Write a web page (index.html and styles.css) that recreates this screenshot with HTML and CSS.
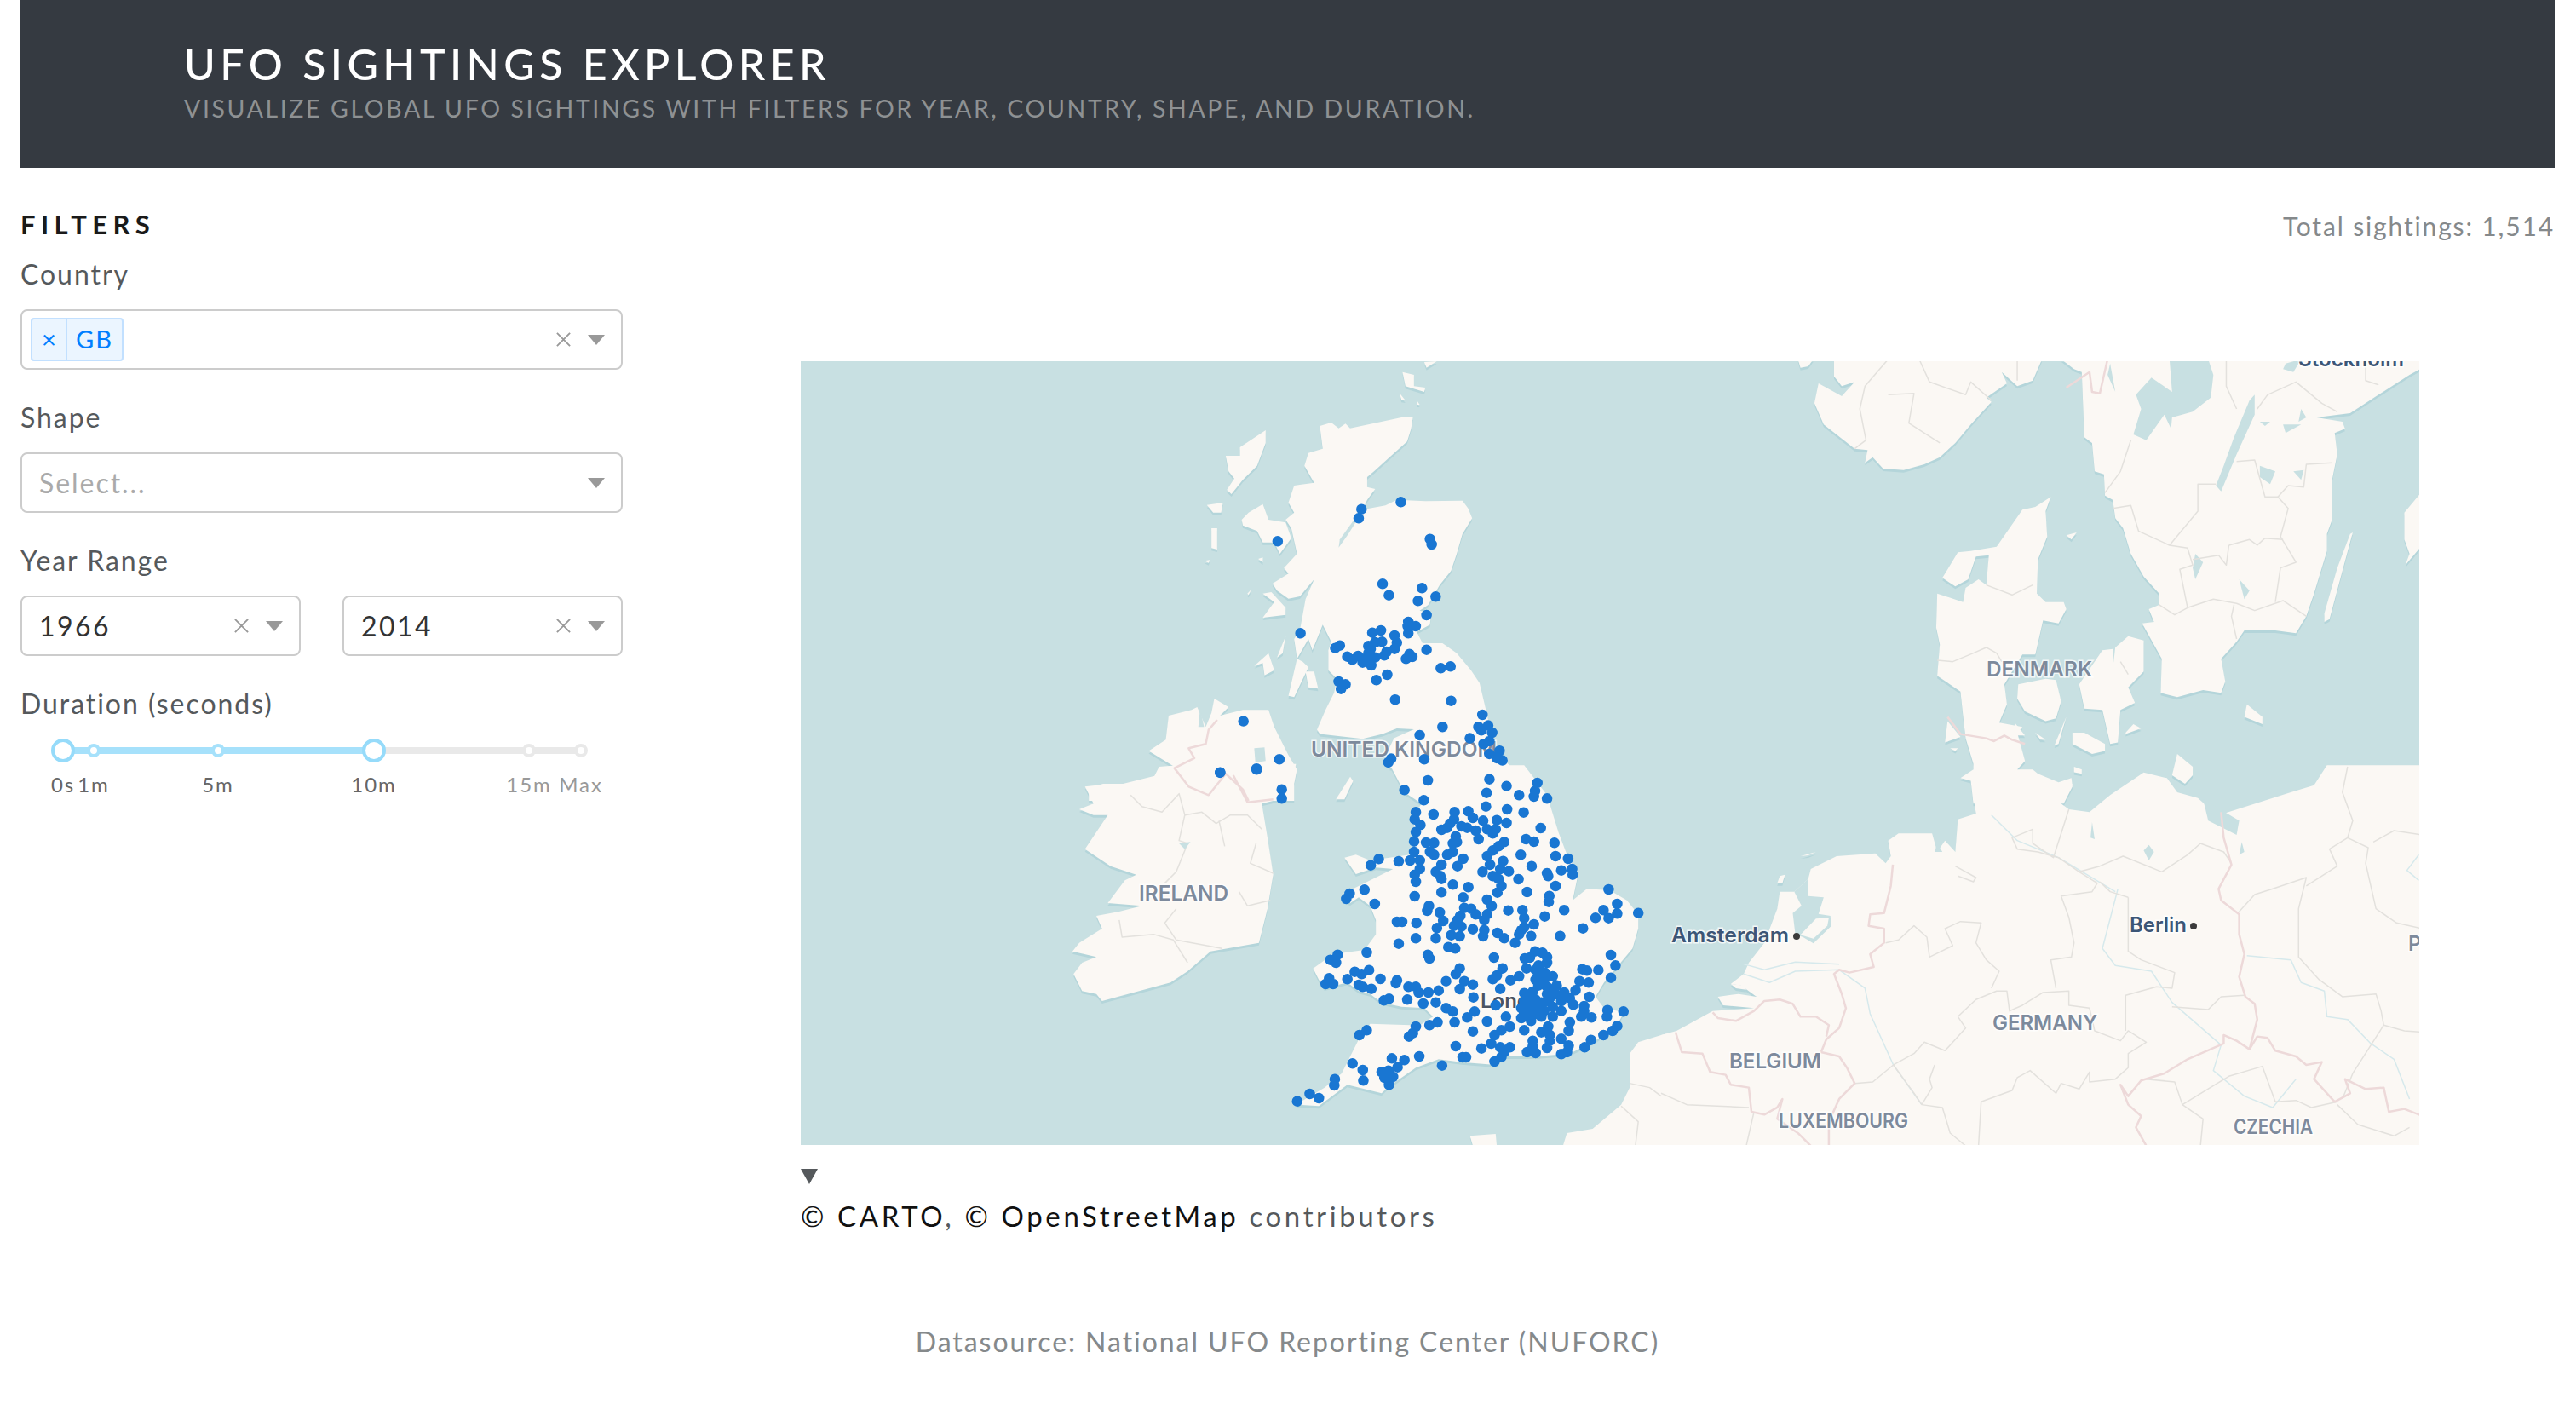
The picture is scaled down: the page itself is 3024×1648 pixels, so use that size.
FILE: index.html
```html
<!DOCTYPE html>
<html lang="en">
<head>
<meta charset="utf-8">
<title>UFO Sightings Explorer</title>
<link rel="stylesheet" href="styles.css">
</head>
<body>
<header class="hero">
  <h1 class="hero-title">UFO SIGHTINGS EXPLORER</h1>
  <p class="hero-sub">VISUALIZE GLOBAL UFO SIGHTINGS WITH FILTERS FOR YEAR, COUNTRY, SHAPE, AND DURATION.</p>
</header>
<main class="main">
  <aside class="filters">
    <h2 class="filters-title">FILTERS</h2>
    <div class="field">
      <label class="label">Country</label>
      <div class="select">
        <div class="select-value">
          <span class="tag"><span class="tag-x">×</span><span class="tag-text">GB</span></span>
        </div>
        <svg class="clear" viewBox="0 0 20 20"><path d="M2 2 18 18M18 2 2 18"/></svg>
        <span class="arrow"></span>
      </div>
    </div>
    <div class="field">
      <label class="label">Shape</label>
      <div class="select">
        <div class="select-value"><span class="placeholder">Select...</span></div>
        <span class="arrow"></span>
      </div>
    </div>
    <div class="field">
      <label class="label">Year Range</label>
      <div class="year-row">
        <div class="select">
          <div class="select-value"><span class="value">1966</span></div>
          <svg class="clear" viewBox="0 0 20 20"><path d="M2 2 18 18M18 2 2 18"/></svg>
          <span class="arrow"></span>
        </div>
        <div class="select">
          <div class="select-value"><span class="value">2014</span></div>
          <svg class="clear" viewBox="0 0 20 20"><path d="M2 2 18 18M18 2 2 18"/></svg>
          <span class="arrow"></span>
        </div>
      </div>
    </div>
    <div class="field">
      <label class="label">Duration (seconds)</label>
      <div class="slider">
        <div class="rail"></div>
        <div class="track"></div>
        <span class="stop on" style="left:86px"></span>
        <span class="stop on" style="left:232px"></span>
        <span class="stop" style="left:597px"></span>
        <span class="stop" style="left:658px"></span>
        <span class="handle" style="left:50px"></span>
        <span class="handle" style="left:415px"></span>
        <span class="mark on" style="left:50px">0s</span>
        <span class="mark on" style="left:86px">1m</span>
        <span class="mark on" style="left:232px">5m</span>
        <span class="mark on" style="left:415px">10m</span>
        <span class="mark" style="left:597px">15m</span>
        <span class="mark" style="left:658px">Max</span>
      </div>
    </div>
  </aside>
  <section class="content">
    <p class="total">Total sightings: 1,514</p>
    <div class="map-wrap">
      <svg class="map" viewBox="940 424 1900 920" width="1900" height="920">
        <defs>
          <g id="land">
            <g transform="translate(930 420) scale(.6696 .3333)">
              <polygon points="925,240 945,228 958,248 970,232 978,248 1040,222 1075,207 1088,210 1085,250 1078,295 1050,345 1020,400 1008,420 1008,455 1022,462 1008,500 1000,535 1040,520 1060,500 1110,505 1175,503 1185,530 1192,565 1175,620 1165,690 1155,750 1135,800 1115,870 1100,890 1120,900 1118,940 1095,965 1105,1005 1140,1005 1165,1040 1190,1100 1205,1145 1215,1230 1225,1320 1235,1380 1250,1420 1262,1445 1048,1445 1042,1395 1055,1340 1090,1308 1060,1305 1035,1325 1000,1342 925,1325 920,1310 935,1240 950,1180 955,1130 940,1100 940,1030 945,1000 930,940 912,1030 905,990 885,1060 895,1070 905,1090 880,1195 870,1190 885,1060 880,990 890,960 900,850 915,780 890,840 870,848 850,820 842,795 870,760 862,740 885,690 875,600 865,570 880,545 870,510 880,450 915,440 898,380 905,335 930,320"/>
              <polygon points="800,545 825,515 835,570 865,580 875,635 855,690 845,650 825,650 815,610 790,590 788,570"/>
              <polygon points="830,255 830,300 815,380 790,430 770,480 762,465 775,425 765,400 760,345 785,345 785,315"/>
              <polygon points="735,600 745,600 745,675 735,670"/>
              <polygon points="727,518 755,510 752,545 738,545"/>
              <polygon points="723,715 732,712 730,722"/>
              <polygon points="817,708 825,703 825,720"/>
              <polygon points="825,830 840,825 865,880 865,905 825,915 845,860"/>
              <polygon points="810,1085 835,1040 845,1100 828,1118 825,1075"/>
              <polygon points="850,1055 865,980 860,1040"/>
              <polygon points="900,1105 915,1105 922,1165 905,1160"/>
              <polygon points="798,830 805,815 800,835"/>
              <polygon points="1070,50 1090,60 1090,100 1110,105 1108,120 1075,100"/>
              <polygon points="1065,125 1075,150 1068,148"/>
              <polygon points="1095,150 1100,165 1096,165"/>
              <polygon points="1108,15 1130,12 1112,35"/>
              <polygon points="520,1515 545,1500 580,1500 640,1470 670,1440 625,1385 655,1345 660,1260 700,1240 710,1230 725,1300 735,1250 740,1200 765,1230 750,1260 790,1240 835,1240 845,1300 870,1400 885,1450 880,1500 880,1560 520,1560"/>
            </g>
            <g transform="translate(1200 900) scale(.6696 .3333)">
              <polygon points="110,70 155,60 190,90 225,60 240,0 300,-10 480,-10 470,80 440,120 420,130 430,250 440,380 430,500 415,620 330,650 290,720 260,760 140,825 130,800 105,790 90,730 105,690 130,670 88,650 100,620 140,570 130,525 170,510 210,490 150,480 180,400 200,380 155,350 110,290 130,230 150,170 125,170 100,150 125,130"/>
              <polygon points="645,-5 880,-5 920,100 940,230 955,310 975,375 965,470 990,430 1030,435 1060,470 1080,520 1080,570 1070,640 1045,700 1020,760 1005,810 1020,850 1055,865 1040,920 1000,970 960,1010 900,1020 835,1020 830,1050 770,1040 730,1030 690,1060 640,1130 630,1150 570,1120 520,1195 480,1190 530,1130 560,1080 590,960 610,905 680,910 690,920 720,880 705,850 665,845 630,830 610,800 590,790 570,760 530,780 520,750 510,710 545,660 600,645 620,590 620,540 610,490 590,460 575,480 560,470 580,430 650,360 620,355 585,378 565,320 585,310 610,330 680,310 690,250 685,180 700,130 670,90"/>
              <polygon points="550,115 575,35 580,50 565,115"/>
              <polygon points="785,1300 830,1293 832,1335 790,1335"/>
              <polygon points="948,1335 955,1290 1000,1275 1050,1190 1065,1130 1065,1010 1080,970 1120,945 1130,940 1140,1335"/>
            </g>
            <g transform="translate(1950 420) scale(.6059 .3333)">
              <polygon points="535,830 585,860 590,810 615,780 630,800 635,695 610,700 595,780 570,805 545,775 575,685 600,680 650,665 700,535 725,525 755,490 745,540 748,630 730,710 728,830 745,860 780,860 785,885 770,935 740,925 725,1045 700,1045 665,1150 670,1220 655,1285 700,1300 690,1320 705,1420 690,1450 720,1450 730,1465 770,1495 795,1480 797,1510 780,1570 605,1570 600,1490 580,1480 605,1450 605,1430 590,1340 585,1260 580,1175 535,1120 540,1010 533,950"/>
              <polygon points="692,1150 745,1130 765,1135 775,1210 765,1270 745,1280 705,1245 690,1200"/>
              <polygon points="810,1150 855,1030 875,1025 875,1095 880,1020 905,980 935,995 935,1105 905,1160 918,1215 890,1240 885,1355 870,1360 855,1240 820,1235"/>
              <polygon points="775,5 800,40 815,50 820,280 835,300 840,400 858,410 860,485 875,500 880,565 895,600 910,690 935,770 965,830 965,870 945,885 955,930 932,935 970,1060 968,1180 1000,1195 1050,1170 1085,1180 1093,1140 1085,1060 1115,1000 1130,960 1190,960 1230,970 1250,910 1265,830 1290,680 1290,620 1300,570 1300,430 1310,340 1305,265 1325,250 1320,225 1270,210 1335,195 1390,130 1450,60 1470,40 1470,5"/>
              <polygon points="1340,615 1335,620 1310,740 1285,900 1285,930 1295,920 1320,750"/>
              <polygon points="1470,480 1440,545 1440,640 1450,690 1442,730 1470,670"/>
              <polygon points="1135,1220 1165,1265 1165,1290 1130,1265"/>
              <polygon points="1000,1395 1030,1440 1030,1470 1015,1500 990,1470"/>
              <polygon points="797,1320 820,1320 860,1360 860,1385 835,1395 797,1360"/>
              <polygon points="785,625 805,615 795,640"/>
              <polygon points="685,1285 705,1330 690,1330"/>
              <polygon points="725,1320 745,1345 735,1345"/>
              <polygon points="785,1265 762,1365 770,1360"/>
              <polygon points="900,1320 915,1290 930,1305 900,1325"/>
              <polygon points="555,1280 550,1355 580,1335"/>
              <polygon points="800,1440 815,1450 815,1465 800,1460"/>
              <polygon points="560,1375 575,1375 570,1385"/>
              <polygon points="265,5 270,35 285,30 295,5"/>
              <polygon points="335,5 335,65 350,100 375,85 350,135 305,90 297,160 315,235 375,320 400,325 395,370 410,350 430,390 470,395 510,375 540,350 570,300 600,235 640,155 630,140 670,90 660,50 690,100 720,80 738,5"/>
            </g>
            <g transform="translate(1950 900) scale(.6059 .3333)">
              <polygon points="0,945 30,930 100,860 180,850 120,840 110,810 150,800 185,810 155,770 135,765 160,730 170,690 200,620 225,500 230,440 258,440 285,395 290,360 340,315 415,305 435,340 445,315 440,260 460,235 525,235 535,300 550,260 570,300 575,185 610,165 605,100 797,60 775,130 790,150 830,160 870,100 935,20 980,40 1000,90 1040,110 1070,160 1090,165 1220,90 1265,65 1290,-5 1475,-5 1475,1335 0,1335"/>
              <polygon points="230,385 240,380 235,410 225,410"/>
              <polygon points="270,315 300,300 285,312"/>
              <polygon points="135,765 160,770 165,785 145,780"/>
            </g>
          </g>
        </defs>
        <rect class="water" x="940" y="424" width="1900" height="920"/>
        <use href="#land" class="land-shadow" y="3"/>
        <use href="#land" class="land"/>
        <g transform="translate(930 420) scale(.6696 .3333)">
          <polygon class="water" points="1000,540 975,620 958,668 960,640 985,570"/>
          <polygon class="water" points="810,1375 828,1372 830,1420 812,1425"/>
          <polygon class="water" points="715,1235 722,1300 712,1300"/>
          <polyline class="border" points="745,1275 730,1310 725,1360 695,1375 705,1410 670,1445 695,1510 730,1540 760,1465 790,1520 800,1560"/>
        </g>
        <g transform="translate(1200 900) scale(.6696 .3333)">
          <polyline class="border" points="370,30 395,125 440,115"/>
          <polyline class="admin" points="190,100 210,140 245,160 275,95 285,170 275,260 290,270 270,370 250,410"/>
          <polyline class="admin" points="285,170 315,160 340,200 365,170 395,170 420,220"/>
          <polyline class="admin" points="410,270 400,340 440,375"/>
          <polyline class="admin" points="355,280 345,190"/>
          <polyline class="admin" points="170,540 175,600 230,590 265,610 290,690"/>
          <polyline class="admin" points="270,500 250,550 270,610 350,640"/>
          <polyline class="admin" points="380,440 395,490 435,470"/>
          <polyline class="admin" points="1065,1115 1100,1130 1120,1160"/>
          <polyline class="admin" points="1050,1195 1080,1250 1075,1335"/>
          <polygon class="water" points="275,270 295,265 285,290"/>
        </g>
        <g transform="translate(1950 420) scale(.6059 .3333)">
          <polygon class="water" points="985,5 1060,5 1070,60 1065,140 1030,190 990,210 988,250 975,200 940,290 915,270 930,180 920,130 950,70 990,120"/>
          <polygon class="water" points="1075,450 1090,380 1110,280 1140,150 1150,130 1150,200 1115,340 1085,470"/>
          <polygon class="water" points="1160,380 1190,400 1180,445 1160,420"/>
          <polygon class="water" points="1225,400 1245,395 1240,430"/>
          <polygon class="water" points="1035,690 1050,720 1035,780 1030,740"/>
          <polygon class="water" points="1120,780 1140,820 1130,850"/>
          <polygon class="water" points="1160,225 1180,225 1170,240"/>
          <polygon class="water" points="1205,235 1240,235 1210,265"/>
          <polygon class="water" points="1240,180 1250,210 1235,225"/>
          <polygon class="water" points="1210,20 1240,5 1225,50 1205,40"/>
          <polygon class="water" points="870,20 880,120 865,60"/>
          <polyline class="border" points="785,105 830,50 835,120 850,125 865,5"/>
          <polyline class="border" points="555,1265 580,1325 630,1340 645,1350 665,1330 680,1345 705,1360"/>
          <polyline class="admin" points="440,5 395,100 385,180 397,290 375,320"/>
          <polyline class="admin" points="440,130 490,125 480,230 540,300"/>
          <polyline class="admin" points="500,5 520,85 590,130 600,85 640,150"/>
          <polyline class="admin" points="690,5 690,80"/>
          <polyline class="admin" points="910,290 890,400 860,475"/>
          <polyline class="admin" points="875,530 910,520 925,610 985,660 1040,540 1040,445 1075,445"/>
          <polyline class="admin" points="985,660 1020,670 1030,730 1005,745 1020,880 1070,850 1115,865 1150,890 1205,855 1250,910"/>
          <polyline class="admin" points="1110,870 1105,910 1115,990"/>
          <polyline class="admin" points="1020,880 995,905 965,870"/>
          <polyline class="admin" points="1115,365 1150,360 1170,490 1195,490 1215,530 1200,630 1230,720 1200,740 1190,860"/>
          <polyline class="admin" points="1195,490 1215,450 1245,455 1250,375 1300,370"/>
          <polyline class="admin" points="1100,660 1140,640 1155,660 1170,635 1205,640"/>
          <polyline class="admin" points="1100,660 1095,730 1080,695 1030,710"/>
          <polyline class="admin" points="1155,180 1175,130 1230,85 1280,160 1310,190"/>
          <polyline class="admin" points="1095,5 1095,100 1115,180"/>
          <polyline class="admin" points="1365,5 1365,80 1390,95"/>
          <polyline class="admin" points="535,1065 565,1070 605,1040 630,1020 650,1040 660,1070"/>
          <polyline class="admin" points="630,800 680,835 720,800"/>
          <polyline class="admin" points="890,1070 905,1115"/>
        </g>
        <g transform="translate(1950 900) scale(.6059 .3333)">
          <polygon class="water" points="258,440 285,395 285,455 315,460 305,518 328,525 330,560 295,622 275,600 260,590 255,515 272,490"/>
          <polygon class="land-fill" points="270,592 300,535 325,532 322,560 295,605"/>
          <polygon class="water" points="945,275 955,300 945,330 935,295"/>
          <polygon class="water" points="835,195 840,255 832,250"/>
          <polygon class="water" points="1125,265 1130,300 1120,310"/>
          <polygon class="water" points="1050,115 1120,190 1115,240 1060,190"/>
          <polygon class="water" points="535,270 545,300 530,300"/>
          <polyline class="river" points="160,695 200,715 260,688 345,695"/>
          <polyline class="river" points="160,730 210,760 260,720 345,715 395,780 405,870 450,1050 505,1190"/>
          <polyline class="river" points="1135,665 1220,680 1240,760 1285,790 1290,880 1330,890 1375,975 1420,1030 1450,1170"/>
          <polyline class="river" points="885,430 855,640 880,700 950,720 990,830 1085,980 1070,1070 1130,1160 1185,1200 1230,1100"/>
          <polyline class="river" points="1468,310 1445,365 1468,400"/>
          <polyline class="river" points="640,170 690,260 770,320 880,440"/>
          <polyline class="admin" points="575,880 610,820 650,790 670,790 675,860 700,840 740,795 790,790 790,840 830,850 840,930 890,965 905,930 940,970 905,1010 905,1060 880,1100 830,1110 830,1075 810,1135 775,1115 765,1150 715,1070 690,1095 680,1140 620,1180 615,1335"/>
          <polyline class="admin" points="640,780 655,720 630,680 610,620 620,550 580,545 550,570 565,630 520,670 515,600 490,560 460,610 435,620"/>
          <polyline class="admin" points="575,880 590,920 550,1000 510,970 490,1010 450,1050 410,1110 375,1115"/>
          <polyline class="admin" points="450,1050 490,1150 505,1190 545,1200 560,1290 590,1335"/>
          <polyline class="admin" points="530,1050 520,1100 525,1130 505,1190"/>
          <polyline class="admin" points="810,370 845,410 835,440 775,455 790,530 800,620 795,670 755,680 765,780"/>
          <polyline class="admin" points="810,370 770,320 730,300 690,290 680,250 720,220 720,270 760,320 790,150"/>
          <polyline class="admin" points="810,370 850,350 895,315 970,370 1020,310 1045,270 1090,300 1105,340"/>
          <polyline class="admin" points="905,460 870,440 850,405"/>
          <polyline class="admin" points="905,460 905,650 930,680 995,725 990,780 960,775 900,805 900,930"/>
          <polyline class="admin" points="990,845 1060,855 1085,810 1130,805"/>
          <polyline class="admin" points="1120,510 1150,450 1185,430 1250,390 1235,500 1235,670 1275,750 1320,810 1385,800 1395,860 1400,910 1440,930 1475,935"/>
          <polyline class="admin" points="1250,420 1310,350 1295,290 1330,250 1370,285 1365,340 1385,500 1425,550 1475,570"/>
          <polyline class="admin" points="1380,265 1420,225 1475,240"/>
          <polyline class="admin" points="1330,0 1320,90 1340,190 1330,250"/>
          <polyline class="admin" points="1400,910 1340,1080 1320,1170"/>
          <polyline class="admin" points="1010,1190 1100,1090 1165,1055 1190,1180 1230,1175 1260,1200 1310,1180"/>
          <polyline class="admin" points="1010,1190 995,1110 940,1100"/>
          <polyline class="admin" points="1010,1190 1050,1240 1045,1335"/>
          <polyline class="admin" points="1310,1190 1350,1260 1420,1300 1450,1270"/>
          <polyline class="admin" points="0,1150 50,1190 170,1200"/>
          <polyline class="admin" points="180,1215 165,1335"/>
          <polyline class="admin" points="570,350 610,390 605,405 575,385"/>
          <polyline class="border" points="449,345 445,420 432,515 405,520 402,560 432,570 432,620 405,660 412,705 365,725 345,715 335,730 350,800 358,850 345,920 320,960 310,1005 345,1020 360,1060 375,1115 345,1170 325,1250 325,1335"/>
          <polyline class="border" points="100,865 110,885 145,895 180,860 200,825 230,820 255,835 270,880 300,880 325,910 320,950"/>
          <polyline class="border" points="28,935 40,1005 80,1010 95,1075 125,1085 135,1120 170,1130 175,1215 200,1225 225,1200 235,1170 225,1240 265,1290 290,1335"/>
          <polyline class="border" points="1085,160 1090,250 1105,345 1080,430 1085,470 1120,520 1120,590 1130,660 1120,740 1132,810 1150,835 1155,890 1140,995 1115,965 1090,945 1090,975 1020,1030 975,1080 930,1105 905,1160 890,1120 905,1190 930,1230 920,1270 940,1335"/>
          <polyline class="border" points="1140,995 1155,950 1175,955 1190,1000 1230,1020 1250,1050 1280,1040 1265,1100 1305,1180 1335,1150 1325,1100 1365,1135 1400,1130 1410,1215 1440,1205 1475,1230"/>
        </g>
        <text class="country" x="1539" y="888" textLength="218" lengthAdjust="spacingAndGlyphs">UNITED KINGDOM</text>
        <text class="country" x="1337" y="1057" textLength="105" lengthAdjust="spacingAndGlyphs">IRELAND</text>
        <text class="country" x="2332" y="794" textLength="124" lengthAdjust="spacingAndGlyphs">DENMARK</text>
        <text class="country" x="2339" y="1209" textLength="123" lengthAdjust="spacingAndGlyphs">GERMANY</text>
        <text class="country" x="2030" y="1254" textLength="108" lengthAdjust="spacingAndGlyphs">BELGIUM</text>
        <text class="country" x="2088" y="1324" textLength="152" lengthAdjust="spacingAndGlyphs">LUXEMBOURG</text>
        <text class="country" x="2622" y="1331" textLength="93" lengthAdjust="spacingAndGlyphs">CZECHIA</text>
        <text class="city" x="1962" y="1106" textLength="138" lengthAdjust="spacingAndGlyphs">Amsterdam</text>
        <text class="city" x="2500" y="1094" textLength="67" lengthAdjust="spacingAndGlyphs">Berlin</text>
        <text class="city" x="2698" y="430" textLength="124" lengthAdjust="spacingAndGlyphs">Stockholm</text>
        <text class="city-muted" x="2827" y="1116">P</text>
        <text class="capital" x="1738" y="1183">London</text>
        <circle class="city-dot" cx="2109" cy="1099" r="4"/>
        <circle class="city-dot" cx="2575" cy="1087" r="4"/>
        <g transform="translate(930 420) scale(.6696 .3333)">
          <path class="dots" d="M1067 508h.1M998 533h.1M993 565h.1M851 646h.1M1118 638h.1M1121 657h.1M1035 796h.1M1104 811h.1M1128 841h.1M1046 836h.1M1097 856h.1M1112 906h.1M1080 930h.1M1079 945h.1M1093 945h.1M1080 970h.1M891 970h.1M1032 960h.1M1017 968h.1M1056 978h.1M1060 1003h.1M1034 1000h.1M1022 1002h.1M1010 1015h.1M960 1013h.1M952 1022h.1M1014 1025h.1M1056 1025h.1M1042 1035h.1M1038 1048h.1M1112 1028h.1M1082 1043h.1M1087 1053h.1M1076 1060h.1M1010 1040h.1M973 1052h.1M982 1063h.1M992 1050h.1M1000 1073h.1M1022 1055h.1M1008 1060h.1M1015 1083h.1M1137 1093h.1M1154 1087h.1M1043 1116h.1M1024 1135h.1M958 1140h.1M970 1150h.1M962 1166h.1M1057 1204h.1M1155 1208h.1M1210 1257h.1M1220 1295h.1M1203 1300h.1M1208 1312h.1M1227 1320h.1M1140 1300h.1M1100 1329h.1M1188 1340h.1M1222 1350h.1M1212 1360h.1M791 1280h.1M854 1414h.1M814 1447h.1M750 1461h.1M1240 1384h.1M1222 1395h.1M1235 1410h.1M1245 1418h.1M1050 1412h.1M1045 1425h.1M1108 1414h.1"/>
        </g>
        <g transform="translate(1200 900) scale(.6696 .3333)">
          <path class="dots" d="M347 20h.1M411 10h.1M455 80h.1M455 112h.1M711 48h.1M670 82h.1M819 44h.1M849 68h.1M903 57h.1M814 92h.1M899 85h.1M871 100h.1M897 105h.1M920 112h.1M704 118h.1M813 140h.1M850 150h.1M879 161h.1M690 160h.1M721 168h.1M758 160h.1M782 157h.1M688 185h.1M698 205h.1M790 180h.1M757 185h.1M750 200h.1M832 188h.1M849 198h.1M808 190h.1M770 210h.1M745 215h.1M735 222h.1M780 215h.1M795 225h.1M815 220h.1M830 220h.1M825 235h.1M800 255h.1M909 216h.1M690 230h.1M687 263h.1M760 245h.1M762 265h.1M883 255h.1M897 264h.1M933 268h.1M845 265h.1M835 280h.1M825 295h.1M708 267h.1M722 268h.1M715 300h.1M687 300h.1M755 270h.1M755 300h.1M745 310h.1M815 315h.1M874 310h.1M935 315h.1M957 324h.1M625 325h.1M611 347h.1M660 333h.1M680 330h.1M697 330h.1M722 310h.1M843 332h.1M773 324h.1M763 350h.1M735 345h.1M820 345h.1M893 350h.1M838 360h.1M853 368h.1M807 370h.1M725 370h.1M697 360h.1M688 380h.1M945 365h.1M920 375h.1M964 360h.1M965 380h.1M690 405h.1M733 385h.1M735 395h.1M825 385h.1M835 395h.1M870 396h.1M922 385h.1M755 415h.1M782 424h.1M840 420h.1M833 443h.1M885 441h.1M935 420h.1M735 442h.1M600 433h.1M574 447h.1M568 465h.1M688 456h.1M924 455h.1M923 476h.1M773 460h.1M815 468h.1M618 483h.1M713 490h.1M710 507h.1M775 497h.1M823 490h.1M787 500h.1M950 505h.1M852 506h.1M877 505h.1M1028 432h.1M1043 483h.1M1019 505h.1M1005 532h.1M1028 533h.1M1043 517h.1M1080 515h.1M732 513h.1M795 520h.1M815 520h.1M768 525h.1M763 540h.1M810 540h.1M880 533h.1M916 527h.1M738 543h.1M657 546h.1M666 546h.1M691 550h.1M897 555h.1M790 572h.1M757 560h.1M770 563h.1M880 565h.1M983 569h.1M727 568h.1M810 575h.1M875 575h.1M833 585h.1M871 590h.1M943 596h.1M892 596h.1M690 604h.1M725 604h.1M752 593h.1M767 597h.1M808 597h.1M845 604h.1M864 620h.1M660 623h.1M747 635h.1M759 640h.1M604 654h.1M711 662h.1M714 675h.1M899 650h.1M912 655h.1M827 672h.1M881 675h.1M890 672h.1M1032 663h.1M553 662h.1M540 680h.1M550 690h.1M920 690h.1M884 710h.1M842 710h.1M1040 700h.1M1010 716h.1M982 713h.1M990 718h.1M767 710h.1M583 722h.1M608 716h.1M595 730h.1M900 715h.1M760 730h.1M916 725h.1M832 735h.1M871 738h.1M930 738h.1M1032 743h.1M825 748h.1M977 755h.1M993 760h.1M570 748h.1M628 747h.1M538 745h.1M532 765h.1M545 765h.1M657 752h.1M655 762h.1M743 755h.1M775 755h.1M790 767h.1M856 752h.1M900 750h.1M915 750h.1M937 770h.1M970 787h.1M590 768h.1M597 775h.1M612 782h.1M677 775h.1M690 775h.1M695 795h.1M712 795h.1M730 788h.1M767 783h.1M838 782h.1M920 775h.1M950 795h.1M880 797h.1M895 792h.1M920 800h.1M935 800h.1M994 810h.1M791 812h.1M960 815h.1M634 823h.1M643 817h.1M675 820h.1M703 834h.1M725 830h.1M743 850h.1M830 840h.1M880 825h.1M900 820h.1M920 825h.1M945 825h.1M966 838h.1M985 843h.1M885 850h.1M905 845h.1M930 845h.1M793 862h.1M755 862h.1M880 870h.1M900 870h.1M945 860h.1M985 860h.1M1026 857h.1M1054 862h.1M780 883h.1M848 880h.1M875 885h.1M892 895h.1M910 880h.1M930 880h.1M980 880h.1M998 883h.1M1025 880h.1M815 897h.1M758 900h.1M728 900h.1M714 910h.1M960 900h.1M690 915h.1M855 915h.1M922 915h.1M1043 913h.1M1035 930h.1M958 930h.1M604 928h.1M591 945h.1M678 950h.1M685 938h.1M790 932h.1M840 928h.1M880 928h.1M828 945h.1M910 935h.1M925 945h.1M1019 945h.1M945 958h.1M997 962h.1M895 965h.1M925 965h.1M822 975h.1M760 984h.1M805 992h.1M958 982h.1M986 988h.1M855 988h.1M838 988h.1M895 985h.1M920 990h.1M845 1005h.1M885 1005h.1M900 1008h.1M945 1012h.1M955 1005h.1M696 1020h.1M778 1023h.1M772 1023h.1M840 1022h.1M828 1038h.1M648 1027h.1M670 1033h.1M579 1045h.1M597 1068h.1M658 1058h.1M736 1052h.1M630 1075h.1M642 1070h.1M635 1095h.1M650 1092h.1M548 1100h.1M598 1105h.1M547 1122h.1M643 1120h.1M504 1152h.1M520 1167h.1M482 1178h.1M890 810h.1M910 830h.1M890 835h.1M875 850h.1M895 855h.1M915 860h.1M885 880h.1M925 815h.1M930 790h.1M905 770h.1M910 735h.1M905 700h.1M920 670h.1"/>
        </g>
      </svg>
    </div>
    <div class="attribution">
      <span class="disclosure"></span>
      <p class="attribution-text"><a class="attr-link">© CARTO</a>, <a class="attr-link">© OpenStreetMap</a> contributors</p>
    </div>
  </section>
</main>
<footer class="footer">Datasource: National UFO Reporting Center (NUFORC)</footer>
</body>
</html>
```
FILE: styles.css
```css
* { box-sizing: border-box; }
html, body { margin: 0; height: 100%; }
body {
  padding: 0 25px 0 24px;
  background: #fff;
  font-family: Lato, "Open Sans", sans-serif;
  font-size: 32px;
  letter-spacing: 1.95px;
  color: #55595c;
  overflow: hidden;
}
.hero {
  height: 197px;
  padding: 49px 0 0 192px;
  background: #353a41;
}
.hero-title {
  margin: 0;
  font-size: 50px;
  line-height: 52px;
  font-weight: 500;
  letter-spacing: 5.4px;
  color: #fff;
}
.hero-sub {
  margin: 9px 0 0;
  font-size: 28.5px;
  line-height: 34px;
  letter-spacing: 2.6px;
  color: #8e9193;
}
.main { display: grid; grid-template-columns: 707px 1fr; column-gap: 50px; }
.filters-title {
  margin: 47px 0 10px;
  font-size: 31px;
  line-height: 38px;
  font-weight: 700;
  letter-spacing: 6.4px;
  color: #1a1a1a;
}
.field { margin-bottom: 26px; }
.label { display: block; height: 71px; padding-top: 10px; line-height: 40px; }
.select {
  display: flex;
  align-items: center;
  height: 71px;
  padding: 0 19px 0 10px;
  border: 2px solid #ccc;
  border-radius: 8px;
  background: #fff;
}
.select-value { flex: 1; display: flex; align-items: center; }
.tag {
  display: flex;
  height: 51px;
  border: 2px solid #c2e0ff;
  border-radius: 4px;
  background: #ebf5ff;
  color: #007eff;
  line-height: 46px;
  font-size: 29px;
}
.tag-x { width: 41px; text-align: center; border-right: 2px solid #c2e0ff; letter-spacing: 0; }
.tag-text { width: 64px; text-align: center; }
.placeholder, .value { padding-left: 10px; }
.placeholder { color: #aaa; }
.value { color: #333; letter-spacing: 2.4px; }
.clear { width: 19px; height: 19px; margin-right: 19px; fill: none; stroke: #999; stroke-width: 2; }
.arrow {
  width: 0;
  height: 0;
  border-style: solid;
  border-width: 12px 10px 0;
  border-color: #999 transparent transparent;
}
.year-row { display: grid; grid-template-columns: 329px 329px; column-gap: 49px; }
.slider { position: relative; height: 76px; margin-top: -1px; }
.rail, .track { position: absolute; top: 11px; height: 8px; border-radius: 4px; }
.rail { left: 50px; width: 608px; background: #e9e9e9; }
.track { left: 50px; width: 365px; background: #a6e1fb; }
.stop, .handle {
  position: absolute;
  transform: translateX(-50%);
  border-radius: 50%;
  background: #fff;
}
.stop { top: 7px; width: 16px; height: 16px; border: 4px solid #e9e9e9; }
.stop.on { border-color: #a6e1fb; }
.handle { top: 1px; width: 28px; height: 28px; border: 4px solid #96dbfa; }
.mark {
  position: absolute;
  top: 40px;
  transform: translateX(-50%);
  font-size: 24px;
  line-height: 30px;
  color: #999;
}
.mark.on { color: #666; }
.content { min-width: 0; }
.total {
  margin: 48px 0 0;
  line-height: 40px;
  font-size: 30px;
  letter-spacing: 1.85px;
  text-align: right;
  color: #85898b;
}
.map-wrap { display: flex; justify-content: center; margin-top: 139px; }
.map { display: block; flex: none; }
.water { fill: #c8e0e2; }
.land { fill: #fbf8f4; }
.land-fill { fill: #fbf8f4; }
.land-shadow { fill: #b4d5da; }
.admin, .border, .river, .dots { fill: none; vector-effect: non-scaling-stroke; stroke-linejoin: round; }
.admin { stroke: #e3e1dd; stroke-width: 1.5; }
.border { stroke: #edd9d9; stroke-width: 2.5; }
.river { stroke: #d6e9ec; stroke-width: 1.5; }
.dots { stroke: #1976d2; stroke-width: 12.5; stroke-linecap: round; }
.country, .city, .capital, .city-muted {
  font-family: Inter, Lato, sans-serif;
  font-weight: 600;
  font-size: 24px;
  letter-spacing: 0;
  stroke: #fff;
  stroke-width: 3px;
  stroke-opacity: .75;
  paint-order: stroke;
}
.country, .city-muted { fill: #7d8a9c; }
.city { fill: #3c5677; }
.capital { fill: #4a5463; }
.city-dot { fill: #3b3b3b; }
.attribution { width: 1900px; margin: 28px 0 0 159px; }
.disclosure {
  display: block;
  width: 0;
  height: 0;
  border-style: solid;
  border-width: 18px 10px 0;
  border-color: #55595c transparent transparent;
}
.attribution-text { margin: 7px 0 0; font-size: 33px; letter-spacing: 3.6px; line-height: 60px; }
.attr-link { color: #111; }
.footer {
  margin-top: 98px;
  text-align: center;
  line-height: 40px;
  color: #85898b;
}
```
